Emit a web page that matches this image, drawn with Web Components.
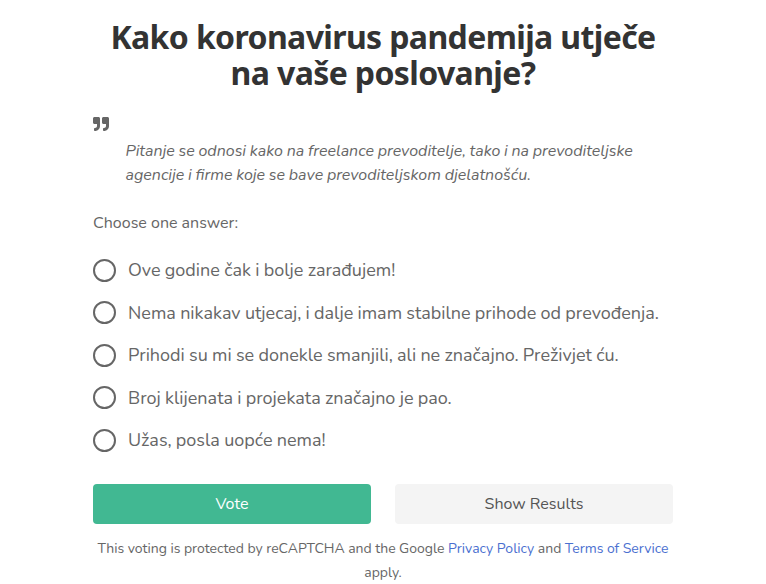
<!DOCTYPE html>
<html lang="hr">
<head>
<meta charset="utf-8">
<title>Kako koronavirus pandemija utječe na vaše poslovanje?</title>
<style>
  body {
    margin: 0;
    background: #fff;
    color: #666;
    font-family: Nunito, Lato, sans-serif;
  }
</style>
</head>
<body>
<poll-card>
  <span slot="title">Kako koronavirus pandemija utječe<br>na vaše poslovanje?</span>
  <poll-quote>Pitanje se odnosi kako na freelance prevoditelje, tako i na prevoditeljske<br>agencije i firme koje se bave prevoditeljskom djelatnošću.</poll-quote>
  <poll-options label="Choose one answer:">
    <poll-option>Ove godine čak i bolje zarađujem!</poll-option>
    <poll-option>Nema nikakav utjecaj, i dalje imam stabilne prihode od prevođenja.</poll-option>
    <poll-option>Prihodi su mi se donekle smanjili, ali ne značajno. Preživjet ću.</poll-option>
    <poll-option>Broj klijenata i projekata značajno je pao.</poll-option>
    <poll-option>Užas, posla uopće nema!</poll-option>
  </poll-options>
  <poll-button slot="actions" primary>Vote</poll-button>
  <poll-button slot="actions">Show Results</poll-button>
  <poll-notice slot="footer"></poll-notice>
</poll-card>

<script>
class PollCard extends HTMLElement {
  connectedCallback() {
    this.attachShadow({ mode: "open" });
    this.shadowRoot.innerHTML = `
      <style>
      :host {
        display: block;
        width: 580px;
        margin: 0 auto;
        padding-top: 19px;
      }
      h1 {
        margin: 0;
        font: bold 32px/36px "Noto Sans", sans-serif;
        color: #333;
        letter-spacing: -0.62px;
        text-align: center;
        white-space: nowrap;
      }
      .actions {
        display: grid;
        grid-template-columns: 1fr 1fr;
        gap: 24px;
        margin-top: 22px;
      }
      </style>
      <h1><slot name="title"></slot></h1>
      <slot></slot>
      <div class="actions"><slot name="actions"></slot></div>
      <slot name="footer"></slot>`;
  }
}

class PollQuote extends HTMLElement {
  connectedCallback() {
    this.attachShadow({ mode: "open" });
    this.shadowRoot.innerHTML = `
      <style>
      :host {
        display: block;
        margin-top: 25px;
      }
      svg {
        display: block;
        width: 16px;
        height: 16px;
        fill: #666;
      }
      p {
        margin: 7px 0 0 32.5px;
        font-size: 16px;
        line-height: 24px;
        font-style: italic;
        word-spacing: -0.4px;
        white-space: nowrap;
      }
      </style>
      <svg viewBox="0 0 512 512">
        <path d="M464 32H336c-26.500 0-48 21.500-48 48v128c0 26.500 21.500 48 48 48h80v64c0 35.300-28.700 64-64 64h-8c-13.300 0-24 10.700-24 24v48c0 13.300 10.700 24 24 24h8c88.400 0 160-71.600 160-160V80c0-26.500-21.500-48-48-48zm-288 0H48C21.500 32 0 53.500 0 80v128c0 26.500 21.500 48 48 48h80v64c0 35.300-28.700 64-64 64h-8c-13.300 0-24 10.700-24 24v48c0 13.300 10.700 24 24 24h8c88.400 0 160-71.600 160-160V80c0-26.500-21.500-48-48-48z"/>
      </svg>
      <p><slot></slot></p>`;
  }
}

class PollOptions extends HTMLElement {
  connectedCallback() {
    this.attachShadow({ mode: "open" });
    this.shadowRoot.innerHTML = `
      <style>
      :host {
        display: block;
        margin-top: 24px;
      }
      .label {
        font-size: 16px;
        line-height: 24px;
      }
      .list {
        display: flex;
        flex-direction: column;
        margin-top: 14px;
      }
      </style>
      <div class="label">${this.getAttribute("label")}</div>
      <div class="list"><slot></slot></div>`;
  }
}

class PollOption extends HTMLElement {
  connectedCallback() {
    this.attachShadow({ mode: "open" });
    this.shadowRoot.innerHTML = `
      <style>
      :host {
        display: flex;
        align-items: center;
        gap: 12px;
        height: 42.5px;
        font-size: 18px;
        word-spacing: -0.35px;
        white-space: nowrap;
        cursor: pointer;
      }
      .radio {
        box-sizing: border-box;
        flex: none;
        width: 23px;
        height: 23px;
        border: 2px solid #666;
        border-radius: 50%;
      }
      </style>
      <span class="radio"></span>
      <span><slot></slot></span>`;
  }
}

class PollButton extends HTMLElement {
  connectedCallback() {
    const primary = this.hasAttribute("primary");
    this.attachShadow({ mode: "open" });
    this.shadowRoot.innerHTML = `
      <style>
      :host {
        display: block;
      }
      button {
        display: block;
        width: 100%;
        height: 40px;
        padding: 0;
        border: 0;
        border-radius: 4px;
        background: ${primary ? "#41b892" : "#f4f4f4"};
        color: ${primary ? "#fff" : "#555"};
        font: inherit;
        font-size: 16px;
        cursor: pointer;
      }
      </style>
      <button><slot></slot></button>`;
  }
}

class PollNotice extends HTMLElement {
  connectedCallback() {
    this.attachShadow({ mode: "open" });
    this.shadowRoot.innerHTML = `
      <style>
      :host {
        display: block;
        margin-top: 13px;
        font-size: 14px;
        line-height: 24px;
        word-spacing: -0.1px;
        text-align: center;
        white-space: nowrap;
      }
      a {
        color: #4a6fd0;
        text-decoration: none;
      }
      </style>
      This voting is protected by reCAPTCHA and the Google <a href="#">Privacy Policy</a> and <a href="#">Terms of Service</a><br>apply.`;
  }
}

customElements.define("poll-card", PollCard);
customElements.define("poll-quote", PollQuote);
customElements.define("poll-options", PollOptions);
customElements.define("poll-option", PollOption);
customElements.define("poll-button", PollButton);
customElements.define("poll-notice", PollNotice);
</script>
</body>
</html>
